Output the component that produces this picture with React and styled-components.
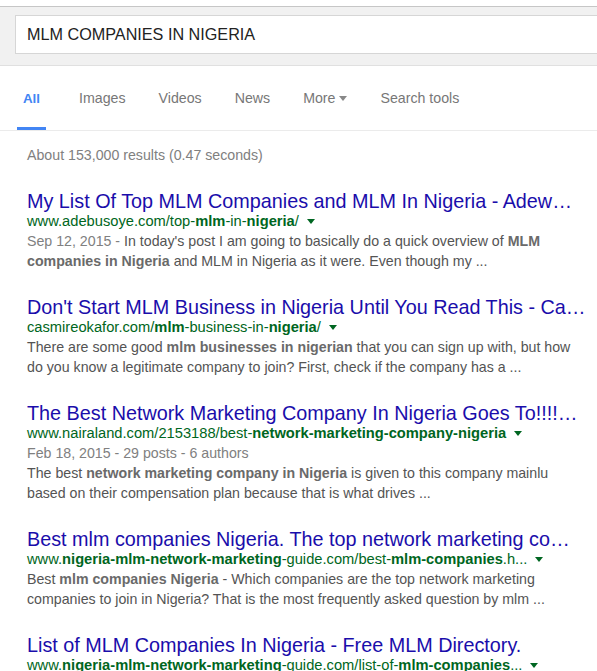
import React from 'react';
import styled, { createGlobalStyle } from 'styled-components';

const GlobalStyle = createGlobalStyle`
  html, body {
    margin: 0;
    padding: 0;
    background: #fff;
    font-family: "Liberation Sans", Arial, sans-serif;
  }
`;

const Page = styled.div`
  width: 597px;
  height: 671px;
  overflow: hidden;
  background: #fff;
`;

const TopStrip = styled.div`
  height: 6px;
  overflow: hidden;
  border-bottom: 1px solid #c6c6c6;
  display: flex;
  font-size: 13px;
  color: #555;
`;

const TabCut = styled.div`
  width: ${(p) => p.w}px;
  flex: none;
  height: 6px;
  border-right: 1px solid #bbb;
  line-height: 13px;
  margin-top: -9px;
  padding-left: ${(p) => p.pad || 0}px;
  white-space: nowrap;
  overflow: hidden;
`;

const Header = styled.div`
  background: #f1f1f1;
  padding: 8px 0 11px 15px;
  border-bottom: 1px solid #e0e0e0;
`;

const SearchBox = styled.div`
  height: 37px;
  background: #fff;
  border: 1px solid #d6d6d6;
  border-right: none;
  padding-left: 11px;
  display: flex;
  align-items: center;
  font-size: 16.2px;
  color: #222;
`;

const Nav = styled.div`
  height: 64px;
  display: flex;
  gap: 33px;
  padding-left: 17px;
  border-bottom: 1px solid #ebebeb;
`;

const Tab = styled.div`
  display: flex;
  align-items: center;
  justify-content: center;
  width: ${(p) => (p.active ? '29px' : 'auto')};
  font-size: ${(p) => (p.active ? '13.4px' : '14.2px')};
  color: ${(p) => (p.active ? '#4285f4' : '#777')};
  font-weight: ${(p) => (p.active ? 'bold' : 'normal')};
  border-bottom: 3px solid ${(p) => (p.active ? '#4285f4' : 'transparent')};
  padding-top: 3px;
`;

const Caret = styled.span`
  display: inline-block;
  margin-left: 4px;
  border-left: 4px solid transparent;
  border-right: 4px solid transparent;
  border-top: 5px solid #888;
  margin-top: 1px;
`;

const Results = styled.div`
  padding: 17px 0 0 27px;
`;

const Count = styled.div`
  font-size: 14.2px;
  line-height: 15px;
  color: #808080;
  margin-bottom: 27px;
`;

const Result = styled.div`
  margin-bottom: 25px;
  width: 556px;
`;

const Title = styled.div`
  font-size: 19.8px;
  line-height: 22px;
  color: #1a0dab;
  white-space: nowrap;
  overflow: hidden;
  text-overflow: ellipsis;
  width: 566px;
`;

const Url = styled.div`
  font-size: 14.7px;
  line-height: 18px;
  color: #006621;
  white-space: nowrap;
  display: flex;
  align-items: center;
  b {
    font-weight: bold;
  }
`;

const UrlCaret = styled.span`
  display: inline-block;
  margin-left: 8px;
  border-left: 4px solid transparent;
  border-right: 4px solid transparent;
  border-top: 5px solid #006621;
`;

const Snippet = styled.div`
  font-size: 14.2px;
  line-height: 20px;
  color: #545454;
  margin-top: 1px;
  b {
    font-weight: bold;
    color: #6a6a6a;
  }
`;

const Meta = styled.span`
  color: #808080;
`;

const results = [
  {
    title: 'My List Of Top MLM Companies and MLM In Nigeria - Adew\u2026',
    url: (
      <>
        www.adebusoye.com/top-<b>mlm</b>-in-<b>nigeria</b>/
      </>
    ),
    snippet: (
      <>
        <Meta>Sep 12, 2015 - </Meta>In today's post I am going to basically do a quick overview of{' '}
        <b>MLM companies in Nigeria</b> and MLM in Nigeria as it were. Even though my ...
      </>
    ),
  },
  {
    title: "Don't Start MLM Business in Nigeria Until You Read This - Ca\u2026",
    url: (
      <>
        casmireokafor.com/<b>mlm</b>-business-in-<b>nigeria</b>/
      </>
    ),
    snippet: (
      <>
        There are some good <b>mlm businesses in nigerian</b> that you can sign up with, but how
        do you know a legitimate company to join? First, check if the company has a ...
      </>
    ),
  },
  {
    title: 'The Best Network Marketing Company In Nigeria Goes To!!!!\u2026',
    url: (
      <>
        www.nairaland.com/2153188/best-<b>network-marketing-company-nigeria</b>
      </>
    ),
    snippet: (
      <>
        <Meta>Feb 18, 2015 - 29 posts - 6 authors</Meta>
        <br />
        The best <b>network marketing company in Nigeria</b> is given to this company mainlu
        based on their compensation plan because that is what drives ...
      </>
    ),
  },
  {
    title: 'Best mlm companies Nigeria. The top network marketing co\u2026',
    url: (
      <>
        www.<b>nigeria-mlm-network-marketing</b>-guide.com/best-<b>mlm-companies</b>.h...
      </>
    ),
    snippet: (
      <>
        Best <b>mlm companies Nigeria</b> - Which companies are the top network marketing
        companies to join in Nigeria? That is the most frequently asked question by mlm ...
      </>
    ),
  },
  {
    title: 'List of MLM Companies In Nigeria - Free MLM Directory.',
    url: (
      <>
        www.<b>nigeria-mlm-network-marketing</b>-guide.com/list-of-<b>mlm-companies</b>...
      </>
    ),
    snippet: null,
  },
];

const tabs = ['All', 'Images', 'Videos', 'News', 'More', 'Search tools'];

const App = () => (
  <Page>
    <GlobalStyle />
    <TopStrip>
      <TabCut w={83} pad={4}>jgygjy gy</TabCut>
      <TabCut w={42} />
      <TabCut w={180}>p</TabCut>
      <TabCut w={205} pad={170}>g ,</TabCut>
    </TopStrip>
    <Header>
      <SearchBox>MLM COMPANIES IN NIGERIA</SearchBox>
    </Header>
    <Nav>
      {tabs.map((t, i) => (
        <Tab key={t} active={i === 0}>
          {t}
          {t === 'More' && <Caret />}
        </Tab>
      ))}
    </Nav>
    <Results>
      <Count>About 153,000 results (0.47 seconds)</Count>
      {results.map((r, i) => (
        <Result key={i}>
          <Title>{r.title}</Title>
          <Url>
            <span>{r.url}</span>
            <UrlCaret />
          </Url>
          {r.snippet && <Snippet>{r.snippet}</Snippet>}
        </Result>
      ))}
    </Results>
  </Page>
);

export default App;
